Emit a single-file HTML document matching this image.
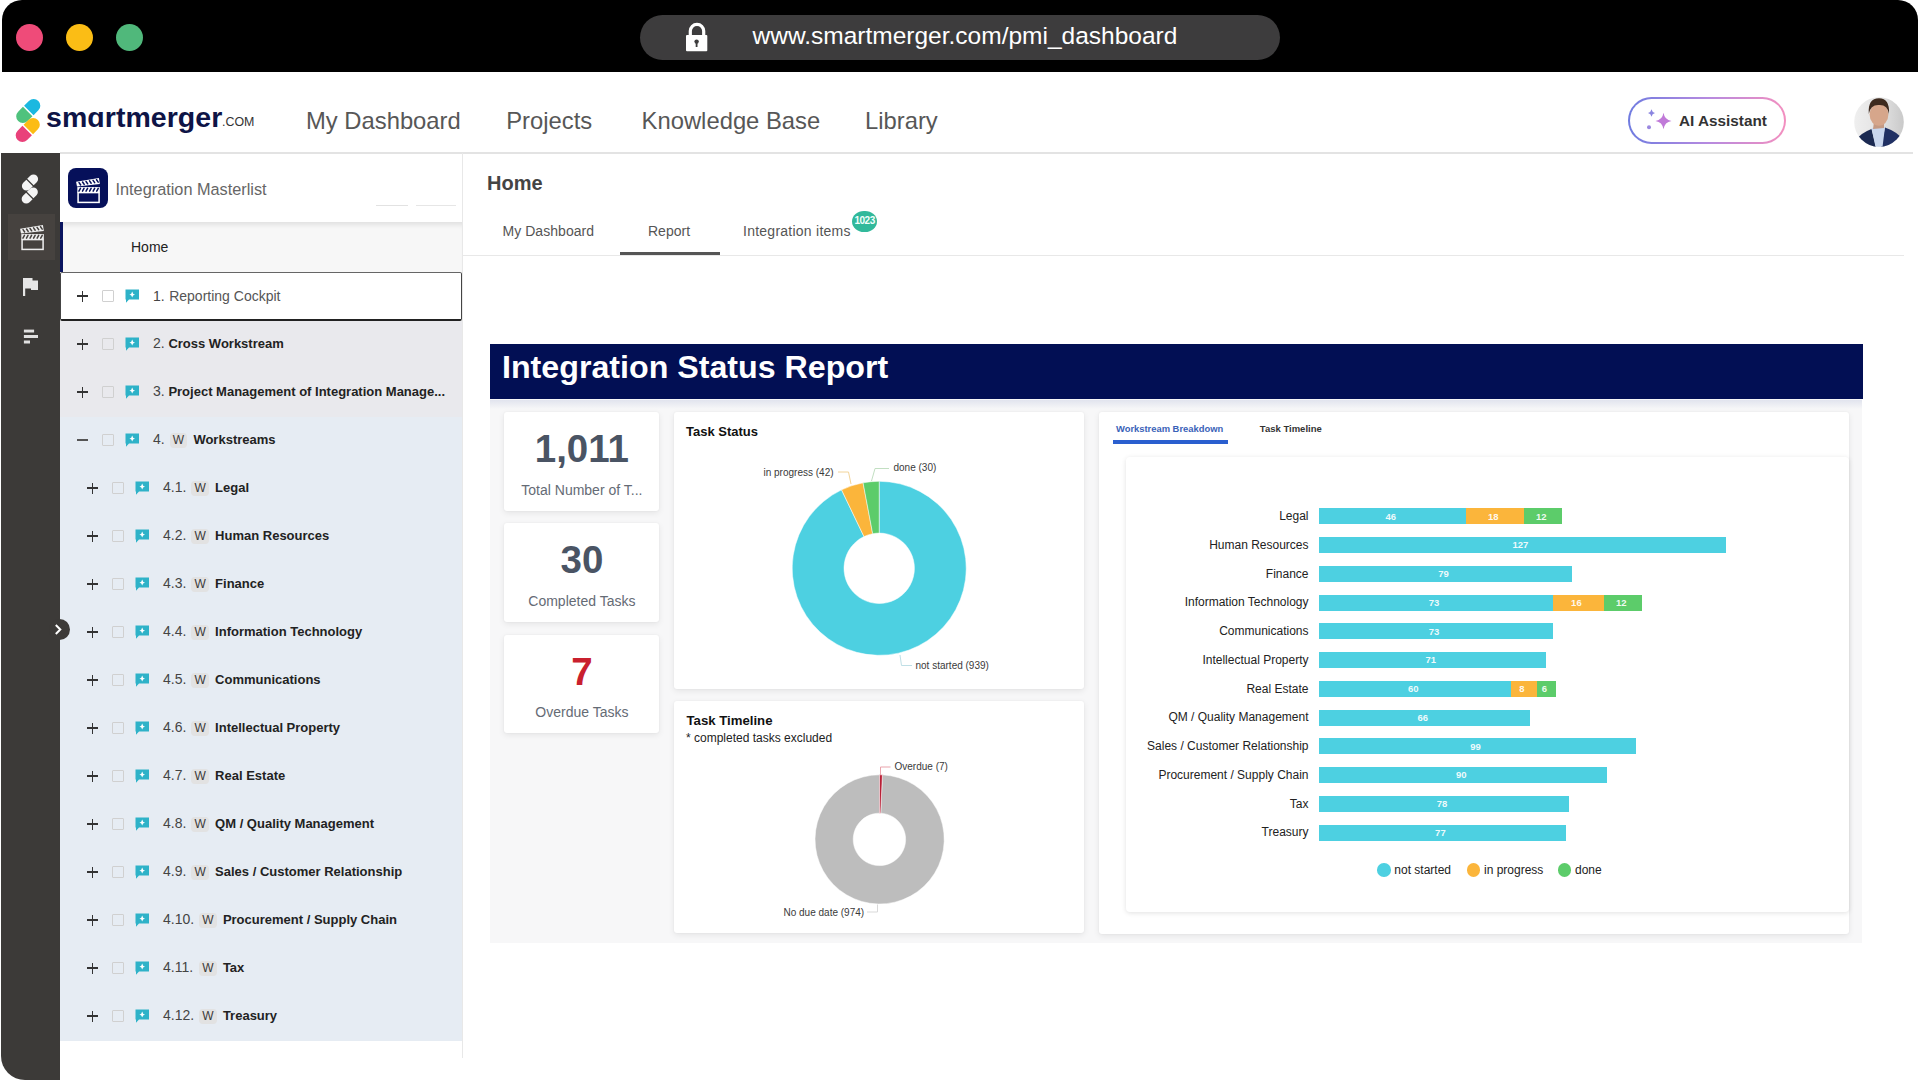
<!DOCTYPE html><html><head><meta charset="utf-8"><title>SmartMerger PMI Dashboard</title><style>
*{margin:0;padding:0;box-sizing:border-box}
html,body{width:1920px;height:1080px;overflow:hidden;background:#fff;font-family:"Liberation Sans",sans-serif}
body{position:relative}
.a{position:absolute}
.t{position:absolute;line-height:1;white-space:nowrap}
svg{position:absolute;overflow:visible}
</style></head><body><div class="a" style="left:2px;top:0px;width:1916px;height:72px;background:#000;border-radius:20px 20px 0 0"></div>
<div class="a" style="left:16.0px;top:23.9px;width:27px;height:27px;background:#ef4b79;border-radius:50%"></div>
<div class="a" style="left:66.0px;top:23.9px;width:27px;height:27px;background:#fbbd15;border-radius:50%"></div>
<div class="a" style="left:116.0px;top:23.9px;width:27px;height:27px;background:#50b87b;border-radius:50%"></div>
<div class="a" style="left:640px;top:15px;width:640px;height:45px;background:#3d3c3d;border-radius:23px"></div>
<svg style="left:0;top:0" width="1920" height="80"><path d="M690.3 36 V31 a6.7 6.7 0 0 1 13.4 0 V36" fill="none" stroke="#fff" stroke-width="3.2"/><rect x="686" y="35" width="21.3" height="16.3" rx="1" fill="#fff"/><circle cx="696.6" cy="41.6" r="2.2" fill="#3d3c3d"/><rect x="695.7" y="42" width="1.8" height="5" fill="#3d3c3d"/></svg>
<div class="t" style="left:752.5px;top:24.3px;font-size:24.5px;color:#fff">www.smartmerger.com/pmi_dashboard</div>
<svg style="left:0;top:0" width="300" height="220"><g transform="translate(28.25 111) rotate(-45)"><path d="M0.8 -6.7 H7.6000000000000005 A6.7 6.7 0 0 1 7.6000000000000005 6.7 H0.8 Z" fill="#1bb8e0"/><path d="M-0.8 -6.7 H-7.6000000000000005 A6.7 6.7 0 0 0 -7.6000000000000005 6.7 H-0.8 Z" fill="#4fc27d"/></g><g transform="translate(27.75 130) rotate(-45)"><path d="M0.8 -6.7 H7.6000000000000005 A6.7 6.7 0 0 1 7.6000000000000005 6.7 H0.8 Z" fill="#fcbc14"/><path d="M-0.8 -6.7 H-7.6000000000000005 A6.7 6.7 0 0 0 -7.6000000000000005 6.7 H-0.8 Z" fill="#e9417a"/></g></svg>
<div class="t" style="left:46.0px;top:102.9px;font-size:28.5px;font-weight:bold;color:#0e1446;letter-spacing:0.05px">sm&#x251;rtmerger</div>
<div class="t" style="left:222.0px;top:116.2px;font-size:12.4px;color:#333">.COM</div>
<div class="t" style="left:306.0px;top:108.9px;font-size:23.8px;color:#575757">My Dashboard</div>
<div class="t" style="left:506.2px;top:108.9px;font-size:23.8px;color:#575757">Projects</div>
<div class="t" style="left:641.6px;top:108.9px;font-size:23.8px;color:#575757">Knowledge Base</div>
<div class="t" style="left:865.0px;top:108.9px;font-size:23.8px;color:#575757">Library</div>
<div class="a" style="left:1627.5px;top:97px;width:158.5px;height:46.5px;border:2.5px solid transparent;border-radius:24px;background:linear-gradient(#fff,#fff) padding-box,linear-gradient(90deg,#6f7be0,#b58ae0 50%,#f38fbf) border-box"></div>
<svg style="left:1640px;top:105px" width="30" height="30"><path d="M23.5 7.7 Q24.6 14.9 31.5 16 Q24.6 17.1 23.5 24.3 Q22.4 17.1 15.5 16 Q22.4 14.9 23.5 7.7Z" fill="#c07ad8"/><path d="M11.5 4.3 Q12.1 7.4 15 8 Q12.1 8.6 11.5 11.7 Q10.9 8.6 8 8 Q10.9 7.4 11.5 4.3Z" fill="#8a85e0"/><circle cx="9" cy="22.3" r="2" fill="#9b88e0"/></svg>
<div class="t" style="left:1679.0px;top:113.3px;font-size:15.3px;font-weight:bold;color:#333">AI Assistant</div>
<svg style="left:1853.5px;top:96.5px" width="50" height="50"><defs><clipPath id="av"><circle cx="25" cy="25" r="24.8"/></clipPath><linearGradient id="avg" x1="0" x2="1"><stop offset="0" stop-color="#efefef"/><stop offset="0.55" stop-color="#e2e2e2"/><stop offset="1" stop-color="#c9c9c9"/></linearGradient></defs><g clip-path="url(#av)"><rect width="50" height="50" fill="url(#avg)"/><path d="M2 43 Q7 36 17.5 32 L22 50 L2 50Z" fill="#1b2a52"/><path d="M49 43 Q44 35 31 30.5 L27 50 L49 50Z" fill="#203063"/><path d="M17.5 31 L31 30 L28.5 50 L21.5 50Z" fill="#c9d7ee"/><path d="M20 25 L30 25 L30 31 L19 32Z" fill="#c49a84"/><ellipse cx="25" cy="17.5" rx="9.4" ry="11.3" fill="#d6a68b"/><path d="M14.8 17 Q13.5 1.5 25 1.3 Q36 1.5 35 17 Q33.5 7.5 25 8 Q16.5 7.5 14.8 17Z" fill="#3e2b1f"/></g></svg>
<div class="a" style="left:60px;top:152px;width:1853px;height:1.6px;background:#e3e3e3"></div>
<div class="a" style="left:1px;top:153px;width:59px;height:927px;background:#3c3a38;border-bottom-left-radius:24px"></div>
<svg style="left:0;top:0" width="60" height="360"><g transform="translate(30 182.5) rotate(-45)"><path d="M0.6 -4.6 H4.950000000000001 A4.6 4.6 0 0 1 4.950000000000001 4.6 H0.6 Z" fill="#f4f4f4"/><path d="M-0.6 -4.6 H-4.950000000000001 A4.6 4.6 0 0 0 -4.950000000000001 4.6 H-0.6 Z" fill="#f4f4f4"/></g><g transform="translate(29.75 195.5) rotate(-45)"><path d="M0.6 -4.6 H4.950000000000001 A4.6 4.6 0 0 1 4.950000000000001 4.6 H0.6 Z" fill="#f4f4f4"/><path d="M-0.6 -4.6 H-4.950000000000001 A4.6 4.6 0 0 0 -4.950000000000001 4.6 H-0.6 Z" fill="#f4f4f4"/></g></svg>
<div class="a" style="left:8px;top:214px;width:47px;height:46px;background:#46423f"></div>
<svg style="left:19.8px;top:223.8px" width="26.4" height="28.5" viewBox="0 0 26 28"><polygon points="0.1,4.7 22.6,1.0 23.5,6.8 1.0,9.4" fill="#eeeeee"/><rect x="1.3" y="9.9" width="22.2" height="5.4" fill="#eeeeee"/><rect x="2.05" y="15.3" width="20.7" height="9.7" fill="none" stroke="#eeeeee" stroke-width="1.5"/><g stroke="#46423f" stroke-width="1.5" stroke-linecap="round"><line x1="3.00" y1="5.51" x2="4.60" y2="7.81"/><line x1="6.45" y1="4.94" x2="8.05" y2="7.24"/><line x1="9.90" y1="4.37" x2="11.50" y2="6.67"/><line x1="13.35" y1="3.80" x2="14.95" y2="6.10"/><line x1="16.80" y1="3.24" x2="18.40" y2="5.54"/><line x1="20.25" y1="2.67" x2="21.85" y2="4.97"/><line x1="4.40" y1="11.2" x2="2.90" y2="13.9"/><line x1="7.90" y1="11.2" x2="6.40" y2="13.9"/><line x1="11.40" y1="11.2" x2="9.90" y2="13.9"/><line x1="14.90" y1="11.2" x2="13.40" y2="13.9"/><line x1="18.40" y1="11.2" x2="16.90" y2="13.9"/><line x1="21.90" y1="11.2" x2="20.40" y2="13.9"/></g></svg>
<svg style="left:0;top:0" width="60" height="360"><path d="M23 278 H32.5 V280.5 H38 V290 H31 V288.5 H25.2 V296 H23Z" fill="#e6e6e6"/><rect x="23.9" y="329.6" width="10.2" height="2.9" fill="#e0e0e0"/><rect x="23.9" y="335" width="14.1" height="3" fill="#e0e0e0"/><rect x="23.9" y="340.5" width="6.1" height="3" fill="#e0e0e0"/></svg>
<div class="a" style="left:60px;top:153.6px;width:402px;height:68.4px;background:#fff"></div>
<div class="a" style="left:68px;top:167.6px;width:39.8px;height:40px;background:#06105a;border-radius:8px"></div>
<svg style="left:76px;top:176.5px" width="26.4" height="28.5" viewBox="0 0 26 28"><polygon points="0.1,4.7 22.6,1.0 23.5,6.8 1.0,9.4" fill="#ffffff"/><rect x="1.3" y="9.9" width="22.2" height="5.4" fill="#ffffff"/><rect x="2.05" y="15.3" width="20.7" height="9.7" fill="none" stroke="#ffffff" stroke-width="1.5"/><g stroke="#06105a" stroke-width="1.5" stroke-linecap="round"><line x1="3.00" y1="5.51" x2="4.60" y2="7.81"/><line x1="6.45" y1="4.94" x2="8.05" y2="7.24"/><line x1="9.90" y1="4.37" x2="11.50" y2="6.67"/><line x1="13.35" y1="3.80" x2="14.95" y2="6.10"/><line x1="16.80" y1="3.24" x2="18.40" y2="5.54"/><line x1="20.25" y1="2.67" x2="21.85" y2="4.97"/><line x1="4.40" y1="11.2" x2="2.90" y2="13.9"/><line x1="7.90" y1="11.2" x2="6.40" y2="13.9"/><line x1="11.40" y1="11.2" x2="9.90" y2="13.9"/><line x1="14.90" y1="11.2" x2="13.40" y2="13.9"/><line x1="18.40" y1="11.2" x2="16.90" y2="13.9"/><line x1="21.90" y1="11.2" x2="20.40" y2="13.9"/></g></svg>
<div class="t" style="left:115.5px;top:180.7px;font-size:16.3px;color:#666">Integration Masterlist</div>
<div class="a" style="left:376px;top:204.8px;width:32px;height:1px;background:#e2e2e2"></div>
<div class="a" style="left:416px;top:204.8px;width:40px;height:1px;background:#e6e6e6"></div>
<div class="a" style="left:60px;top:222px;width:402px;height:50px;background:#f7f7f7;box-shadow:inset 0 6px 5px -3px rgba(0,0,0,0.09)"></div>
<div class="a" style="left:60px;top:222px;width:2.5px;height:50px;background:#0a1560"></div>
<div class="t" style="left:131.0px;top:239.6px;font-size:14px;color:#222">Home</div>
<div class="a" style="left:461.5px;top:153px;width:1.2px;height:905px;background:#e8e8e8"></div>
<div class="a" style="left:60px;top:272px;width:402px;height:48.5px;background:#fff;border:1.5px solid #444;border-top-color:#666;border-bottom:2px solid #222;border-radius:2px"></div>
<div class="a" style="left:77px;top:295.45px;width:11px;height:1.1px;background:#333"></div>
<div class="a" style="left:81.95px;top:290.5px;width:1.1px;height:11px;background:#333"></div>
<div class="a" style="left:101.5px;top:290px;width:12px;height:12px;border:1.2px solid #d0d0d0;border-radius:1px"></div>
<svg style="left:125px;top:289px" width="15" height="15" viewBox="0 0 15 15"><path d="M0.5 0.5 H14 V10.5 H4 L1 13.8 V10.5 H0.5Z" fill="#2eb2c8"/><path d="M7.2 2.6 Q7.6 5.2 10 5.6 Q7.6 6 7.2 8.6 Q6.8 6 4.4 5.6 Q6.8 5.2 7.2 2.6Z" fill="#fff"/></svg>
<div class="t" style="left:153.0px;top:288.7px;font-size:14px;color:#444">1.</div>
<div class="t" style="left:169.2px;top:288.7px;font-size:14px;color:#555">Reporting Cockpit</div>
<div class="a" style="left:60px;top:320.5px;width:402px;height:48px;background:#e9e9ed"></div>
<div class="a" style="left:77px;top:343.45px;width:11px;height:1.1px;background:#333"></div>
<div class="a" style="left:81.95px;top:338.5px;width:1.1px;height:11px;background:#333"></div>
<div class="a" style="left:101.5px;top:338px;width:12px;height:12px;border:1.2px solid #d0d0d0;border-radius:1px"></div>
<svg style="left:125px;top:337px" width="15" height="15" viewBox="0 0 15 15"><path d="M0.5 0.5 H14 V10.5 H4 L1 13.8 V10.5 H0.5Z" fill="#2eb2c8"/><path d="M7.2 2.6 Q7.6 5.2 10 5.6 Q7.6 6 7.2 8.6 Q6.8 6 4.4 5.6 Q6.8 5.2 7.2 2.6Z" fill="#fff"/></svg>
<div class="t" style="left:153.0px;top:336.1px;font-size:14px;color:#444">2.</div>
<div class="t" style="left:168.4px;top:336.9px;font-size:13px;font-weight:bold;color:#222">Cross Workstream</div>
<div class="a" style="left:60px;top:368.5px;width:402px;height:48px;background:#e9e9ed"></div>
<div class="a" style="left:77px;top:391.45px;width:11px;height:1.1px;background:#333"></div>
<div class="a" style="left:81.95px;top:386.5px;width:1.1px;height:11px;background:#333"></div>
<div class="a" style="left:101.5px;top:386px;width:12px;height:12px;border:1.2px solid #d0d0d0;border-radius:1px"></div>
<svg style="left:125px;top:385px" width="15" height="15" viewBox="0 0 15 15"><path d="M0.5 0.5 H14 V10.5 H4 L1 13.8 V10.5 H0.5Z" fill="#2eb2c8"/><path d="M7.2 2.6 Q7.6 5.2 10 5.6 Q7.6 6 7.2 8.6 Q6.8 6 4.4 5.6 Q6.8 5.2 7.2 2.6Z" fill="#fff"/></svg>
<div class="t" style="left:153.0px;top:384.1px;font-size:14px;color:#444">3.</div>
<div class="t" style="left:168.4px;top:384.9px;font-size:13px;font-weight:bold;color:#222">Project Management of Integration Manage...</div>
<div class="a" style="left:60px;top:416.5px;width:402px;height:48px;background:#e6ecf3"></div>
<div class="a" style="left:77px;top:439.45px;width:11px;height:1.1px;background:#555"></div>
<div class="a" style="left:101.5px;top:434px;width:12px;height:12px;border:1.2px solid #d0d0d0;border-radius:1px"></div>
<svg style="left:125px;top:433px" width="15" height="15" viewBox="0 0 15 15"><path d="M0.5 0.5 H14 V10.5 H4 L1 13.8 V10.5 H0.5Z" fill="#2eb2c8"/><path d="M7.2 2.6 Q7.6 5.2 10 5.6 Q7.6 6 7.2 8.6 Q6.8 6 4.4 5.6 Q6.8 5.2 7.2 2.6Z" fill="#fff"/></svg>
<div class="t" style="left:153.0px;top:432.1px;font-size:14px;color:#444">4.</div>
<div class="a" style="left:169.7px;top:432.7px;width:17.5px;height:15px;background:#e2e2e2;border-radius:4px"></div>
<div class="t" style="left:169.7px;width:17.5px;text-align:center;top:433.7px;font-size:12px;color:#3a3a3a">W</div>
<div class="t" style="left:193.4px;top:432.9px;font-size:13px;font-weight:bold;color:#222">Workstreams</div>
<div class="a" style="left:60px;top:464.5px;width:402px;height:48px;background:#e6ecf3"></div>
<div class="a" style="left:87px;top:487.45px;width:11px;height:1.1px;background:#333"></div>
<div class="a" style="left:91.95px;top:482.5px;width:1.1px;height:11px;background:#333"></div>
<div class="a" style="left:111.5px;top:482px;width:12px;height:12px;border:1.2px solid #d0d0d0;border-radius:1px"></div>
<svg style="left:135px;top:481px" width="15" height="15" viewBox="0 0 15 15"><path d="M0.5 0.5 H14 V10.5 H4 L1 13.8 V10.5 H0.5Z" fill="#2eb2c8"/><path d="M7.2 2.6 Q7.6 5.2 10 5.6 Q7.6 6 7.2 8.6 Q6.8 6 4.4 5.6 Q6.8 5.2 7.2 2.6Z" fill="#fff"/></svg>
<div class="t" style="left:163.0px;top:480.1px;font-size:14px;color:#444">4.1.</div>
<div class="a" style="left:191.4px;top:480.7px;width:17.5px;height:15px;background:#e2e2e2;border-radius:4px"></div>
<div class="t" style="left:191.4px;width:17.5px;text-align:center;top:481.7px;font-size:12px;color:#3a3a3a">W</div>
<div class="t" style="left:215.1px;top:480.9px;font-size:13px;font-weight:bold;color:#222">Legal</div>
<div class="a" style="left:60px;top:512.5px;width:402px;height:48px;background:#e6ecf3"></div>
<div class="a" style="left:87px;top:535.45px;width:11px;height:1.1px;background:#333"></div>
<div class="a" style="left:91.95px;top:530.5px;width:1.1px;height:11px;background:#333"></div>
<div class="a" style="left:111.5px;top:530px;width:12px;height:12px;border:1.2px solid #d0d0d0;border-radius:1px"></div>
<svg style="left:135px;top:529px" width="15" height="15" viewBox="0 0 15 15"><path d="M0.5 0.5 H14 V10.5 H4 L1 13.8 V10.5 H0.5Z" fill="#2eb2c8"/><path d="M7.2 2.6 Q7.6 5.2 10 5.6 Q7.6 6 7.2 8.6 Q6.8 6 4.4 5.6 Q6.8 5.2 7.2 2.6Z" fill="#fff"/></svg>
<div class="t" style="left:163.0px;top:528.1px;font-size:14px;color:#444">4.2.</div>
<div class="a" style="left:191.4px;top:528.7px;width:17.5px;height:15px;background:#e2e2e2;border-radius:4px"></div>
<div class="t" style="left:191.4px;width:17.5px;text-align:center;top:529.7px;font-size:12px;color:#3a3a3a">W</div>
<div class="t" style="left:215.1px;top:528.9px;font-size:13px;font-weight:bold;color:#222">Human Resources</div>
<div class="a" style="left:60px;top:560.5px;width:402px;height:48px;background:#e6ecf3"></div>
<div class="a" style="left:87px;top:583.45px;width:11px;height:1.1px;background:#333"></div>
<div class="a" style="left:91.95px;top:578.5px;width:1.1px;height:11px;background:#333"></div>
<div class="a" style="left:111.5px;top:578px;width:12px;height:12px;border:1.2px solid #d0d0d0;border-radius:1px"></div>
<svg style="left:135px;top:577px" width="15" height="15" viewBox="0 0 15 15"><path d="M0.5 0.5 H14 V10.5 H4 L1 13.8 V10.5 H0.5Z" fill="#2eb2c8"/><path d="M7.2 2.6 Q7.6 5.2 10 5.6 Q7.6 6 7.2 8.6 Q6.8 6 4.4 5.6 Q6.8 5.2 7.2 2.6Z" fill="#fff"/></svg>
<div class="t" style="left:163.0px;top:576.1px;font-size:14px;color:#444">4.3.</div>
<div class="a" style="left:191.4px;top:576.7px;width:17.5px;height:15px;background:#e2e2e2;border-radius:4px"></div>
<div class="t" style="left:191.4px;width:17.5px;text-align:center;top:577.7px;font-size:12px;color:#3a3a3a">W</div>
<div class="t" style="left:215.1px;top:576.9px;font-size:13px;font-weight:bold;color:#222">Finance</div>
<div class="a" style="left:60px;top:608.5px;width:402px;height:48px;background:#e6ecf3"></div>
<div class="a" style="left:87px;top:631.45px;width:11px;height:1.1px;background:#333"></div>
<div class="a" style="left:91.95px;top:626.5px;width:1.1px;height:11px;background:#333"></div>
<div class="a" style="left:111.5px;top:626px;width:12px;height:12px;border:1.2px solid #d0d0d0;border-radius:1px"></div>
<svg style="left:135px;top:625px" width="15" height="15" viewBox="0 0 15 15"><path d="M0.5 0.5 H14 V10.5 H4 L1 13.8 V10.5 H0.5Z" fill="#2eb2c8"/><path d="M7.2 2.6 Q7.6 5.2 10 5.6 Q7.6 6 7.2 8.6 Q6.8 6 4.4 5.6 Q6.8 5.2 7.2 2.6Z" fill="#fff"/></svg>
<div class="t" style="left:163.0px;top:624.1px;font-size:14px;color:#444">4.4.</div>
<div class="a" style="left:191.4px;top:624.7px;width:17.5px;height:15px;background:#e2e2e2;border-radius:4px"></div>
<div class="t" style="left:191.4px;width:17.5px;text-align:center;top:625.7px;font-size:12px;color:#3a3a3a">W</div>
<div class="t" style="left:215.1px;top:624.9px;font-size:13px;font-weight:bold;color:#222">Information Technology</div>
<div class="a" style="left:60px;top:656.5px;width:402px;height:48px;background:#e6ecf3"></div>
<div class="a" style="left:87px;top:679.45px;width:11px;height:1.1px;background:#333"></div>
<div class="a" style="left:91.95px;top:674.5px;width:1.1px;height:11px;background:#333"></div>
<div class="a" style="left:111.5px;top:674px;width:12px;height:12px;border:1.2px solid #d0d0d0;border-radius:1px"></div>
<svg style="left:135px;top:673px" width="15" height="15" viewBox="0 0 15 15"><path d="M0.5 0.5 H14 V10.5 H4 L1 13.8 V10.5 H0.5Z" fill="#2eb2c8"/><path d="M7.2 2.6 Q7.6 5.2 10 5.6 Q7.6 6 7.2 8.6 Q6.8 6 4.4 5.6 Q6.8 5.2 7.2 2.6Z" fill="#fff"/></svg>
<div class="t" style="left:163.0px;top:672.1px;font-size:14px;color:#444">4.5.</div>
<div class="a" style="left:191.4px;top:672.7px;width:17.5px;height:15px;background:#e2e2e2;border-radius:4px"></div>
<div class="t" style="left:191.4px;width:17.5px;text-align:center;top:673.7px;font-size:12px;color:#3a3a3a">W</div>
<div class="t" style="left:215.1px;top:672.9px;font-size:13px;font-weight:bold;color:#222">Communications</div>
<div class="a" style="left:60px;top:704.5px;width:402px;height:48px;background:#e6ecf3"></div>
<div class="a" style="left:87px;top:727.45px;width:11px;height:1.1px;background:#333"></div>
<div class="a" style="left:91.95px;top:722.5px;width:1.1px;height:11px;background:#333"></div>
<div class="a" style="left:111.5px;top:722px;width:12px;height:12px;border:1.2px solid #d0d0d0;border-radius:1px"></div>
<svg style="left:135px;top:721px" width="15" height="15" viewBox="0 0 15 15"><path d="M0.5 0.5 H14 V10.5 H4 L1 13.8 V10.5 H0.5Z" fill="#2eb2c8"/><path d="M7.2 2.6 Q7.6 5.2 10 5.6 Q7.6 6 7.2 8.6 Q6.8 6 4.4 5.6 Q6.8 5.2 7.2 2.6Z" fill="#fff"/></svg>
<div class="t" style="left:163.0px;top:720.1px;font-size:14px;color:#444">4.6.</div>
<div class="a" style="left:191.4px;top:720.7px;width:17.5px;height:15px;background:#e2e2e2;border-radius:4px"></div>
<div class="t" style="left:191.4px;width:17.5px;text-align:center;top:721.7px;font-size:12px;color:#3a3a3a">W</div>
<div class="t" style="left:215.1px;top:720.9px;font-size:13px;font-weight:bold;color:#222">Intellectual Property</div>
<div class="a" style="left:60px;top:752.5px;width:402px;height:48px;background:#e6ecf3"></div>
<div class="a" style="left:87px;top:775.45px;width:11px;height:1.1px;background:#333"></div>
<div class="a" style="left:91.95px;top:770.5px;width:1.1px;height:11px;background:#333"></div>
<div class="a" style="left:111.5px;top:770px;width:12px;height:12px;border:1.2px solid #d0d0d0;border-radius:1px"></div>
<svg style="left:135px;top:769px" width="15" height="15" viewBox="0 0 15 15"><path d="M0.5 0.5 H14 V10.5 H4 L1 13.8 V10.5 H0.5Z" fill="#2eb2c8"/><path d="M7.2 2.6 Q7.6 5.2 10 5.6 Q7.6 6 7.2 8.6 Q6.8 6 4.4 5.6 Q6.8 5.2 7.2 2.6Z" fill="#fff"/></svg>
<div class="t" style="left:163.0px;top:768.1px;font-size:14px;color:#444">4.7.</div>
<div class="a" style="left:191.4px;top:768.7px;width:17.5px;height:15px;background:#e2e2e2;border-radius:4px"></div>
<div class="t" style="left:191.4px;width:17.5px;text-align:center;top:769.7px;font-size:12px;color:#3a3a3a">W</div>
<div class="t" style="left:215.1px;top:768.9px;font-size:13px;font-weight:bold;color:#222">Real Estate</div>
<div class="a" style="left:60px;top:800.5px;width:402px;height:48px;background:#e6ecf3"></div>
<div class="a" style="left:87px;top:823.45px;width:11px;height:1.1px;background:#333"></div>
<div class="a" style="left:91.95px;top:818.5px;width:1.1px;height:11px;background:#333"></div>
<div class="a" style="left:111.5px;top:818px;width:12px;height:12px;border:1.2px solid #d0d0d0;border-radius:1px"></div>
<svg style="left:135px;top:817px" width="15" height="15" viewBox="0 0 15 15"><path d="M0.5 0.5 H14 V10.5 H4 L1 13.8 V10.5 H0.5Z" fill="#2eb2c8"/><path d="M7.2 2.6 Q7.6 5.2 10 5.6 Q7.6 6 7.2 8.6 Q6.8 6 4.4 5.6 Q6.8 5.2 7.2 2.6Z" fill="#fff"/></svg>
<div class="t" style="left:163.0px;top:816.1px;font-size:14px;color:#444">4.8.</div>
<div class="a" style="left:191.4px;top:816.7px;width:17.5px;height:15px;background:#e2e2e2;border-radius:4px"></div>
<div class="t" style="left:191.4px;width:17.5px;text-align:center;top:817.7px;font-size:12px;color:#3a3a3a">W</div>
<div class="t" style="left:215.1px;top:816.9px;font-size:13px;font-weight:bold;color:#222">QM / Quality Management</div>
<div class="a" style="left:60px;top:848.5px;width:402px;height:48px;background:#e6ecf3"></div>
<div class="a" style="left:87px;top:871.45px;width:11px;height:1.1px;background:#333"></div>
<div class="a" style="left:91.95px;top:866.5px;width:1.1px;height:11px;background:#333"></div>
<div class="a" style="left:111.5px;top:866px;width:12px;height:12px;border:1.2px solid #d0d0d0;border-radius:1px"></div>
<svg style="left:135px;top:865px" width="15" height="15" viewBox="0 0 15 15"><path d="M0.5 0.5 H14 V10.5 H4 L1 13.8 V10.5 H0.5Z" fill="#2eb2c8"/><path d="M7.2 2.6 Q7.6 5.2 10 5.6 Q7.6 6 7.2 8.6 Q6.8 6 4.4 5.6 Q6.8 5.2 7.2 2.6Z" fill="#fff"/></svg>
<div class="t" style="left:163.0px;top:864.1px;font-size:14px;color:#444">4.9.</div>
<div class="a" style="left:191.4px;top:864.7px;width:17.5px;height:15px;background:#e2e2e2;border-radius:4px"></div>
<div class="t" style="left:191.4px;width:17.5px;text-align:center;top:865.7px;font-size:12px;color:#3a3a3a">W</div>
<div class="t" style="left:215.1px;top:864.9px;font-size:13px;font-weight:bold;color:#222">Sales / Customer Relationship</div>
<div class="a" style="left:60px;top:896.5px;width:402px;height:48px;background:#e6ecf3"></div>
<div class="a" style="left:87px;top:919.45px;width:11px;height:1.1px;background:#333"></div>
<div class="a" style="left:91.95px;top:914.5px;width:1.1px;height:11px;background:#333"></div>
<div class="a" style="left:111.5px;top:914px;width:12px;height:12px;border:1.2px solid #d0d0d0;border-radius:1px"></div>
<svg style="left:135px;top:913px" width="15" height="15" viewBox="0 0 15 15"><path d="M0.5 0.5 H14 V10.5 H4 L1 13.8 V10.5 H0.5Z" fill="#2eb2c8"/><path d="M7.2 2.6 Q7.6 5.2 10 5.6 Q7.6 6 7.2 8.6 Q6.8 6 4.4 5.6 Q6.8 5.2 7.2 2.6Z" fill="#fff"/></svg>
<div class="t" style="left:163.0px;top:912.1px;font-size:14px;color:#444">4.10.</div>
<div class="a" style="left:199.2px;top:912.7px;width:17.5px;height:15px;background:#e2e2e2;border-radius:4px"></div>
<div class="t" style="left:199.2px;width:17.5px;text-align:center;top:913.7px;font-size:12px;color:#3a3a3a">W</div>
<div class="t" style="left:222.9px;top:912.9px;font-size:13px;font-weight:bold;color:#222">Procurement / Supply Chain</div>
<div class="a" style="left:60px;top:944.5px;width:402px;height:48px;background:#e6ecf3"></div>
<div class="a" style="left:87px;top:967.45px;width:11px;height:1.1px;background:#333"></div>
<div class="a" style="left:91.95px;top:962.5px;width:1.1px;height:11px;background:#333"></div>
<div class="a" style="left:111.5px;top:962px;width:12px;height:12px;border:1.2px solid #d0d0d0;border-radius:1px"></div>
<svg style="left:135px;top:961px" width="15" height="15" viewBox="0 0 15 15"><path d="M0.5 0.5 H14 V10.5 H4 L1 13.8 V10.5 H0.5Z" fill="#2eb2c8"/><path d="M7.2 2.6 Q7.6 5.2 10 5.6 Q7.6 6 7.2 8.6 Q6.8 6 4.4 5.6 Q6.8 5.2 7.2 2.6Z" fill="#fff"/></svg>
<div class="t" style="left:163.0px;top:960.1px;font-size:14px;color:#444">4.11.</div>
<div class="a" style="left:199.2px;top:960.7px;width:17.5px;height:15px;background:#e2e2e2;border-radius:4px"></div>
<div class="t" style="left:199.2px;width:17.5px;text-align:center;top:961.7px;font-size:12px;color:#3a3a3a">W</div>
<div class="t" style="left:222.9px;top:960.9px;font-size:13px;font-weight:bold;color:#222">Tax</div>
<div class="a" style="left:60px;top:992.5px;width:402px;height:48px;background:#e6ecf3"></div>
<div class="a" style="left:87px;top:1015.45px;width:11px;height:1.1px;background:#333"></div>
<div class="a" style="left:91.95px;top:1010.5px;width:1.1px;height:11px;background:#333"></div>
<div class="a" style="left:111.5px;top:1010px;width:12px;height:12px;border:1.2px solid #d0d0d0;border-radius:1px"></div>
<svg style="left:135px;top:1009px" width="15" height="15" viewBox="0 0 15 15"><path d="M0.5 0.5 H14 V10.5 H4 L1 13.8 V10.5 H0.5Z" fill="#2eb2c8"/><path d="M7.2 2.6 Q7.6 5.2 10 5.6 Q7.6 6 7.2 8.6 Q6.8 6 4.4 5.6 Q6.8 5.2 7.2 2.6Z" fill="#fff"/></svg>
<div class="t" style="left:163.0px;top:1008.1px;font-size:14px;color:#444">4.12.</div>
<div class="a" style="left:199.2px;top:1008.7px;width:17.5px;height:15px;background:#e2e2e2;border-radius:4px"></div>
<div class="t" style="left:199.2px;width:17.5px;text-align:center;top:1009.7px;font-size:12px;color:#3a3a3a">W</div>
<div class="t" style="left:222.9px;top:1008.9px;font-size:13px;font-weight:bold;color:#222">Treasury</div>
<div class="a" style="left:48.5px;top:618.5px;width:21px;height:21px;background:#3c3a38;border-radius:50%"></div>
<svg style="left:48.5px;top:618.5px" width="21" height="21"><path d="M6.8 6 L11.3 10.5 L6.8 15" fill="none" stroke="#fff" stroke-width="2"/></svg>
<div class="t" style="left:487.0px;top:172.9px;font-size:20px;font-weight:bold;color:#444">Home</div>
<div class="t" style="left:502.5px;top:223.7px;font-size:14px;color:#555;letter-spacing:0.05px">My Dashboard</div>
<div class="t" style="left:648.0px;top:223.7px;font-size:14px;color:#555">Report</div>
<div class="t" style="left:743.0px;top:223.7px;font-size:14px;color:#555;letter-spacing:0.25px">Integration items</div>
<div class="a" style="left:620px;top:251.5px;width:100px;height:3px;background:#555"></div>
<div class="a" style="left:463px;top:254.5px;width:1441px;height:1.2px;background:#e8e8e8"></div>
<div class="a" style="left:852.1px;top:210.5px;width:24.6px;height:21.6px;background:#31b99b;border-radius:50%"></div>
<div class="t" style="left:854.6px;top:216.1px;font-size:10px;color:#f2fffb;font-weight:bold;letter-spacing:-0.55px">1023</div>
<div class="a" style="left:490px;top:399px;width:1372px;height:544px;background:#f7f7f8"></div>
<div class="a" style="left:490px;top:343.5px;width:1372.5px;height:55.5px;background:#020f54"></div>
<div class="t" style="left:502.0px;top:350.8px;font-size:32.2px;color:#fff;font-weight:bold">Integration Status Report</div>
<div class="a" style="left:490px;top:399.5px;width:1372px;height:9px;background:linear-gradient(#e1e4ee,#f7f7f8)"></div>
<div class="a" style="left:504.4px;top:411.7px;width:155px;height:99px;background:#fff;border-radius:3px;box-shadow:0 2px 6px rgba(0,0,0,0.08),0 0 2px rgba(0,0,0,0.05)"></div>
<div class="t" style="left:504.4px;width:155px;text-align:center;top:429.7px;font-size:38.5px;font-weight:bold;color:#4a5464">1,011</div>
<div class="t" style="left:504.4px;width:155px;text-align:center;top:482.5px;font-size:14px;color:#656b75">Total Number of T...</div>
<div class="a" style="left:504.4px;top:523px;width:155px;height:98.5px;background:#fff;border-radius:3px;box-shadow:0 2px 6px rgba(0,0,0,0.08),0 0 2px rgba(0,0,0,0.05)"></div>
<div class="t" style="left:504.4px;width:155px;text-align:center;top:541.0px;font-size:38.5px;font-weight:bold;color:#4a5464">30</div>
<div class="t" style="left:504.4px;width:155px;text-align:center;top:594.3px;font-size:14px;color:#656b75">Completed Tasks</div>
<div class="a" style="left:504.4px;top:635.4px;width:155px;height:98px;background:#fff;border-radius:3px;box-shadow:0 2px 6px rgba(0,0,0,0.08),0 0 2px rgba(0,0,0,0.05)"></div>
<div class="t" style="left:504.4px;width:155px;text-align:center;top:652.8px;font-size:38.5px;font-weight:bold;color:#c9202e">7</div>
<div class="t" style="left:504.4px;width:155px;text-align:center;top:705.1px;font-size:14px;color:#656b75">Overdue Tasks</div>
<div class="a" style="left:674px;top:411.8px;width:410px;height:277px;background:#fff;border-radius:3px;box-shadow:0 2px 6px rgba(0,0,0,0.08),0 0 2px rgba(0,0,0,0.05)"></div>
<div class="t" style="left:686.0px;top:425.4px;font-size:13px;font-weight:bold;color:#111">Task Status</div>
<div class="a" style="left:674px;top:700.8px;width:410px;height:232.5px;background:#fff;border-radius:3px;box-shadow:0 2px 6px rgba(0,0,0,0.08),0 0 2px rgba(0,0,0,0.05)"></div>
<svg style="left:0;top:0" width="1920" height="1080"><path d="M879.20 481.30 A87 87 0 1 1 841.56 489.87 L863.97 536.57 A35.2 35.2 0 1 0 879.20 533.10Z" fill="#4dd0e1" stroke="#fff" stroke-width="0.5"/><path d="M841.56 489.87 A87 87 0 0 1 863.07 482.81 L872.68 533.71 A35.2 35.2 0 0 0 863.97 536.57Z" fill="#fbb53b" stroke="#fff" stroke-width="0.5"/><path d="M863.07 482.81 A87 87 0 0 1 879.20 481.30 L879.20 533.10 A35.2 35.2 0 0 0 872.68 533.71Z" fill="#5ccc6a" stroke="#fff" stroke-width="0.5"/><path d="M851 484 L848.5 472 H838" fill="none" stroke="#f2d49a" stroke-width="1"/><path d="M871.5 481 L875 468.5 H889" fill="none" stroke="#c2dfc2" stroke-width="1"/><path d="M900 655 L901.5 665.5 H912" fill="none" stroke="#bfdfe6" stroke-width="1"/><path d="M882.40 774.86 A64.6 64.6 0 1 1 879.50 774.80 L879.50 813.20 A26.2 26.2 0 1 0 880.67 813.23Z" fill="#bdbdbd" stroke="#fff" stroke-width="0.5"/><path d="M879.50 774.80 A64.6 64.6 0 0 1 882.40 774.86 L880.67 813.23 A26.2 26.2 0 0 0 879.50 813.20Z" fill="#b81f36" stroke="#fff" stroke-width="0.5"/><path d="M880.5 775 V767 H890.5" fill="none" stroke="#e9a3ab" stroke-width="1"/><path d="M877.5 904.5 V912 H867" fill="none" stroke="#d9d9d9" stroke-width="1"/></svg>
<div class="t" style="left:763.5px;top:467.5px;font-size:10px;color:#3a3a3a">in progress (42)</div>
<div class="t" style="left:893.5px;top:462.9px;font-size:10px;color:#3a3a3a">done (30)</div>
<div class="t" style="left:915.5px;top:660.7px;font-size:10px;color:#3a3a3a">not started (939)</div>
<div class="t" style="left:686.5px;top:713.9px;font-size:13.2px;font-weight:bold;color:#111">Task Timeline</div>
<div class="t" style="left:686.0px;top:731.8px;font-size:12px;color:#222">* completed tasks excluded</div>
<div class="t" style="left:894.5px;top:761.7px;font-size:10px;color:#3a3a3a">Overdue (7)</div>
<div class="t" style="left:783.5px;top:907.5px;font-size:10px;color:#3a3a3a">No due date (974)</div>
<div class="a" style="left:1099.4px;top:412px;width:750px;height:521.5px;background:#fff;border-radius:3px;box-shadow:0 2px 6px rgba(0,0,0,0.08),0 0 2px rgba(0,0,0,0.05)"></div>
<div class="t" style="left:1116.0px;top:424.3px;font-size:9.4px;font-weight:bold;color:#3a62b8">Workstream Breakdown</div>
<div class="a" style="left:1113px;top:439.6px;width:115px;height:4.3px;background:#2a5fcf"></div>
<div class="t" style="left:1259.8px;top:424.3px;font-size:9.5px;font-weight:bold;color:#333">Task Timeline</div>
<div class="a" style="left:1126.3px;top:456.5px;width:722.6px;height:455px;background:#fff;border-radius:4px;box-shadow:0 1px 5px rgba(0,0,0,0.12)"></div>
<div class="t" style="left:1100px;width:208.5px;text-align:right;top:510.1px;font-size:12px;color:#222">Legal</div>
<div class="a" style="left:1319.2px;top:508.4px;width:147.2px;height:16px;background:#4dd0e1"></div>
<div class="t" style="left:1317.2px;width:147.2px;text-align:center;top:511.7px;font-size:9.5px;font-weight:bold;color:rgba(255,255,255,0.92)">46</div>
<div class="a" style="left:1466.4px;top:508.4px;width:57.6px;height:16px;background:#fbb53b"></div>
<div class="t" style="left:1464.4px;width:57.6px;text-align:center;top:511.7px;font-size:9.5px;font-weight:bold;color:rgba(255,255,255,0.92)">18</div>
<div class="a" style="left:1524.0px;top:508.4px;width:38.4px;height:16px;background:#5ccc6a"></div>
<div class="t" style="left:1522.0px;width:38.4px;text-align:center;top:511.7px;font-size:9.5px;font-weight:bold;color:rgba(255,255,255,0.92)">12</div>
<div class="t" style="left:1100px;width:208.5px;text-align:right;top:538.9px;font-size:12px;color:#222">Human Resources</div>
<div class="a" style="left:1319.2px;top:537.1px;width:406.4px;height:16px;background:#4dd0e1"></div>
<div class="t" style="left:1317.2px;width:406.4px;text-align:center;top:540.4px;font-size:9.5px;font-weight:bold;color:rgba(255,255,255,0.92)">127</div>
<div class="t" style="left:1100px;width:208.5px;text-align:right;top:567.6px;font-size:12px;color:#222">Finance</div>
<div class="a" style="left:1319.2px;top:565.9px;width:252.8px;height:16px;background:#4dd0e1"></div>
<div class="t" style="left:1317.2px;width:252.8px;text-align:center;top:569.2px;font-size:9.5px;font-weight:bold;color:rgba(255,255,255,0.92)">79</div>
<div class="t" style="left:1100px;width:208.5px;text-align:right;top:596.4px;font-size:12px;color:#222">Information Technology</div>
<div class="a" style="left:1319.2px;top:594.6px;width:233.6px;height:16px;background:#4dd0e1"></div>
<div class="t" style="left:1317.2px;width:233.6px;text-align:center;top:597.9px;font-size:9.5px;font-weight:bold;color:rgba(255,255,255,0.92)">73</div>
<div class="a" style="left:1552.8px;top:594.6px;width:51.2px;height:16px;background:#fbb53b"></div>
<div class="t" style="left:1550.8px;width:51.2px;text-align:center;top:597.9px;font-size:9.5px;font-weight:bold;color:rgba(255,255,255,0.92)">16</div>
<div class="a" style="left:1604.0px;top:594.6px;width:38.4px;height:16px;background:#5ccc6a"></div>
<div class="t" style="left:1602.0px;width:38.4px;text-align:center;top:597.9px;font-size:9.5px;font-weight:bold;color:rgba(255,255,255,0.92)">12</div>
<div class="t" style="left:1100px;width:208.5px;text-align:right;top:625.1px;font-size:12px;color:#222">Communications</div>
<div class="a" style="left:1319.2px;top:623.4px;width:233.6px;height:16px;background:#4dd0e1"></div>
<div class="t" style="left:1317.2px;width:233.6px;text-align:center;top:626.7px;font-size:9.5px;font-weight:bold;color:rgba(255,255,255,0.92)">73</div>
<div class="t" style="left:1100px;width:208.5px;text-align:right;top:653.9px;font-size:12px;color:#222">Intellectual Property</div>
<div class="a" style="left:1319.2px;top:652.1px;width:227.2px;height:16px;background:#4dd0e1"></div>
<div class="t" style="left:1317.2px;width:227.2px;text-align:center;top:655.4px;font-size:9.5px;font-weight:bold;color:rgba(255,255,255,0.92)">71</div>
<div class="t" style="left:1100px;width:208.5px;text-align:right;top:682.6px;font-size:12px;color:#222">Real Estate</div>
<div class="a" style="left:1319.2px;top:680.9px;width:192.0px;height:16px;background:#4dd0e1"></div>
<div class="t" style="left:1317.2px;width:192.0px;text-align:center;top:684.2px;font-size:9.5px;font-weight:bold;color:rgba(255,255,255,0.92)">60</div>
<div class="a" style="left:1511.2px;top:680.9px;width:25.6px;height:16px;background:#fbb53b"></div>
<div class="t" style="left:1509.2px;width:25.6px;text-align:center;top:684.2px;font-size:9.5px;font-weight:bold;color:rgba(255,255,255,0.92)">8</div>
<div class="a" style="left:1536.8px;top:680.9px;width:19.2px;height:16px;background:#5ccc6a"></div>
<div class="t" style="left:1534.8px;width:19.2px;text-align:center;top:684.2px;font-size:9.5px;font-weight:bold;color:rgba(255,255,255,0.92)">6</div>
<div class="t" style="left:1100px;width:208.5px;text-align:right;top:711.4px;font-size:12px;color:#222">QM / Quality Management</div>
<div class="a" style="left:1319.2px;top:709.6px;width:211.2px;height:16px;background:#4dd0e1"></div>
<div class="t" style="left:1317.2px;width:211.2px;text-align:center;top:712.9px;font-size:9.5px;font-weight:bold;color:rgba(255,255,255,0.92)">66</div>
<div class="t" style="left:1100px;width:208.5px;text-align:right;top:740.1px;font-size:12px;color:#222">Sales / Customer Relationship</div>
<div class="a" style="left:1319.2px;top:738.4px;width:316.8px;height:16px;background:#4dd0e1"></div>
<div class="t" style="left:1317.2px;width:316.8px;text-align:center;top:741.7px;font-size:9.5px;font-weight:bold;color:rgba(255,255,255,0.92)">99</div>
<div class="t" style="left:1100px;width:208.5px;text-align:right;top:768.9px;font-size:12px;color:#222">Procurement / Supply Chain</div>
<div class="a" style="left:1319.2px;top:767.1px;width:288.0px;height:16px;background:#4dd0e1"></div>
<div class="t" style="left:1317.2px;width:288.0px;text-align:center;top:770.4px;font-size:9.5px;font-weight:bold;color:rgba(255,255,255,0.92)">90</div>
<div class="t" style="left:1100px;width:208.5px;text-align:right;top:797.6px;font-size:12px;color:#222">Tax</div>
<div class="a" style="left:1319.2px;top:795.9px;width:249.6px;height:16px;background:#4dd0e1"></div>
<div class="t" style="left:1317.2px;width:249.6px;text-align:center;top:799.2px;font-size:9.5px;font-weight:bold;color:rgba(255,255,255,0.92)">78</div>
<div class="t" style="left:1100px;width:208.5px;text-align:right;top:826.4px;font-size:12px;color:#222">Treasury</div>
<div class="a" style="left:1319.2px;top:824.6px;width:246.4px;height:16px;background:#4dd0e1"></div>
<div class="t" style="left:1317.2px;width:246.4px;text-align:center;top:827.9px;font-size:9.5px;font-weight:bold;color:rgba(255,255,255,0.92)">77</div>
<div class="a" style="left:1377.2px;top:863.1px;width:13.6px;height:13.6px;background:#4dd0e1;border-radius:50%"></div>
<div class="t" style="left:1394.3px;top:863.5px;font-size:12px;color:#222">not started</div>
<div class="a" style="left:1466.9px;top:863.1px;width:13.6px;height:13.6px;background:#fbb53b;border-radius:50%"></div>
<div class="t" style="left:1484.0px;top:863.5px;font-size:12px;color:#222">in progress</div>
<div class="a" style="left:1557.9px;top:863.1px;width:13.6px;height:13.6px;background:#5ccc6a;border-radius:50%"></div>
<div class="t" style="left:1575.0px;top:863.5px;font-size:12px;color:#222">done</div></body></html>
